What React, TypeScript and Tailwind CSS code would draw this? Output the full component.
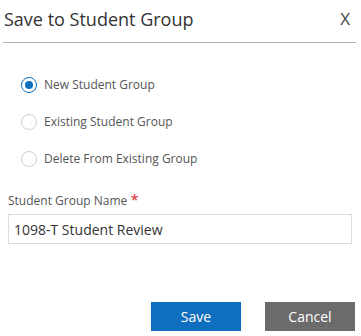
import { useState } from "react";

const options = ["New Student Group", "Existing Student Group", "Delete From Existing Group"];

export default function App() {
  const [choice, setChoice] = useState(0);
  const [name, setName] = useState("1098-T Student Review");

  return (
    <div className="w-[361px] h-[336px] bg-white font-['Open_Sans',sans-serif] text-[#333]">
      <div className="flex items-center justify-between pl-[4px] pr-[11px] h-[36px] pt-[2px]">
        <h2 className="text-[18px] text-[#333]">Save to Student Group</h2>
        <button className="text-[17px] text-[#444]">X</button>
      </div>
      <div className="mx-[3px] mt-[6px] h-px bg-[#b3b3b3] w-[353px]" />

      <div className="flex flex-col gap-[21px] pl-[21px] pt-[34px]">
        {options.map((label, i) => (
          <label key={label} className="flex items-center gap-[7px] h-[16px] cursor-pointer">
            <span
              onClick={() => setChoice(i)}
              className={
                i === choice
                  ? "flex items-center justify-center w-[16px] h-[16px] rounded-full border-[1.5px] border-[#0f6ebe]"
                  : "w-[16px] h-[16px] rounded-full border border-[#cfcfcf]"
              }
            >
              {i === choice && <span className="w-[8px] h-[8px] rounded-full bg-[#0f6ebe]" />}
            </span>
            <span className="text-[12px] text-[#555]">{label}</span>
          </label>
        ))}
      </div>

      <div className="px-[8px] pt-[25px]">
        <div className="text-[12px] text-[#555] leading-[16px]">
          Student Group Name <span className="text-[#d9262b] text-[15px] leading-none">*</span>
        </div>
        <input
          value={name}
          onChange={(e) => setName(e.target.value)}
          className="mt-[5px] w-[344px] h-[30px] border border-[#dcdcdc] px-[5px] text-[14px] text-[#333] outline-none"
        />
      </div>

      <div className="flex justify-end gap-[24px] pr-[6px] pt-[58px]">
        <button className="w-[90px] h-[29px] bg-[#0f6ebe] text-white text-[14px]">Save</button>
        <button className="w-[90px] h-[29px] bg-[#6b6b6b] text-white text-[14px]">Cancel</button>
      </div>
    </div>
  );
}
